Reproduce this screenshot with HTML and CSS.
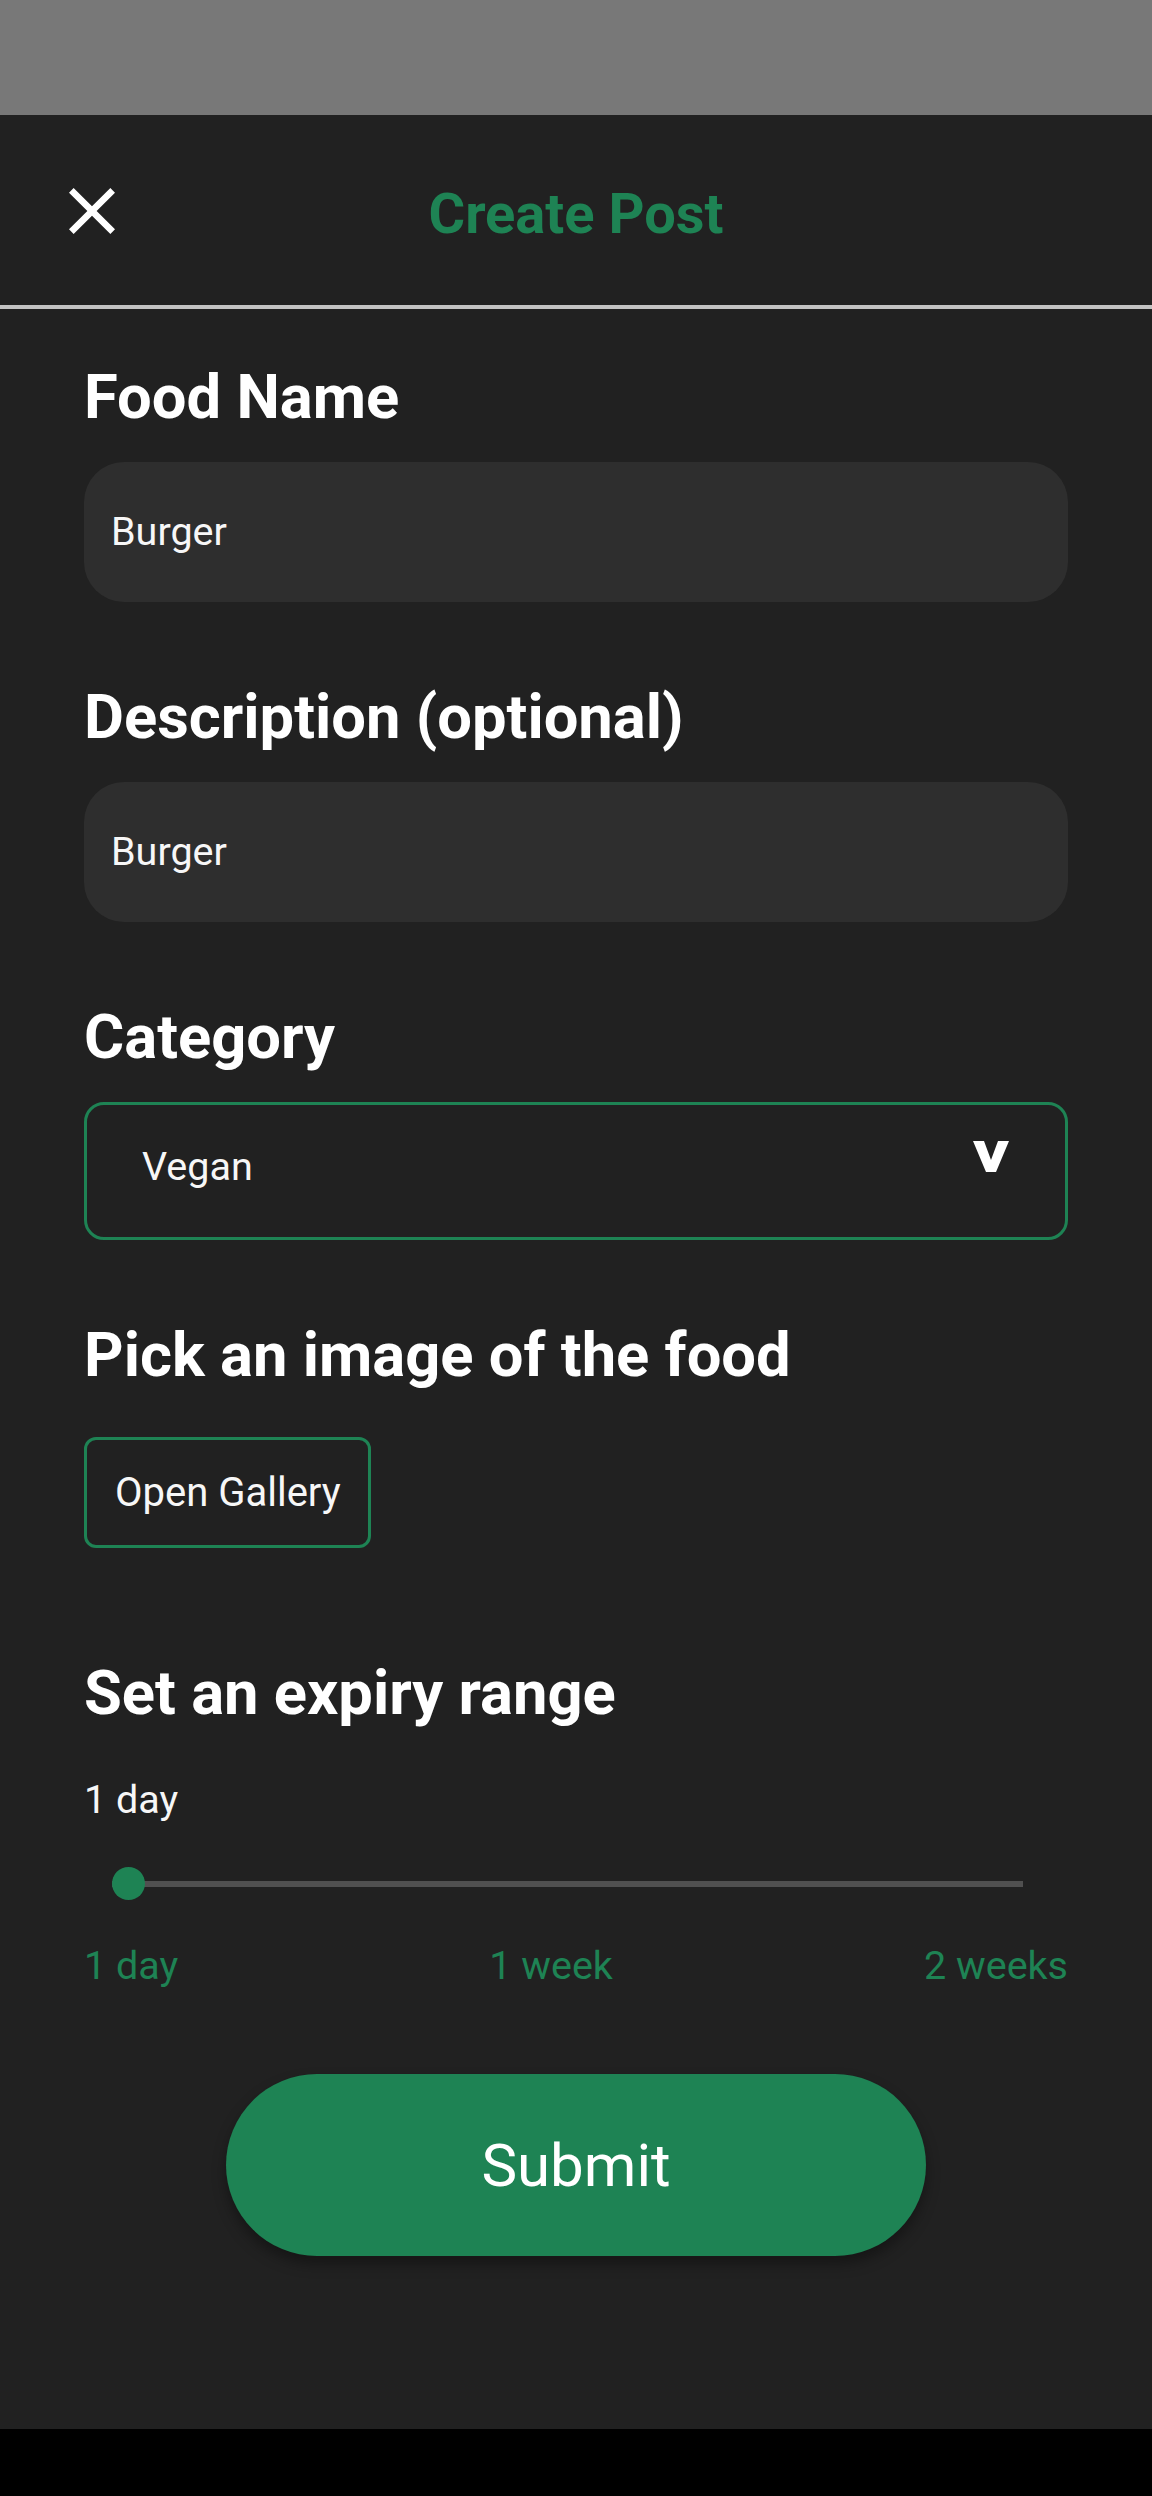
FILE: index.html
```html
<!DOCTYPE html>
<html lang="en">
<head>
<meta charset="utf-8">
<title>Create Post</title>
<link rel="stylesheet" href="styles.css">
</head>
<body>
<div class="phone">
  <div class="statusbar"></div>
  <header class="topbar">
    <div class="close-wrap">
      <svg class="close-icon" viewBox="5 5 14 14" width="46" height="46" aria-label="Close">
        <path fill="#ffffff" d="M19 6.41L17.59 5 12 10.59 6.41 5 5 6.41 10.59 12 5 17.59 6.41 19 12 13.41 17.59 19 19 17.59 13.41 12z"/>
      </svg>
    </div>
    <h1 class="title">Create Post</h1>
    <div></div>
  </header>
  <div class="divider"></div>

  <main class="form">
    <section class="field">
      <h2 class="label">Food Name</h2>
      <div class="input">Burger</div>
    </section>

    <section class="field">
      <h2 class="label">Description (optional)</h2>
      <div class="input">Burger</div>
    </section>

    <section class="field">
      <h2 class="label">Category</h2>
      <div class="select">
        <span class="select-value">Vegan</span>
        <svg class="chevron" width="36" height="31" viewBox="0 0 36 31">
          <polygon fill="#ffffff" points="0,0 11,0 18,19 25,0 36,0 23,31 13,31"/>
        </svg>
      </div>
    </section>

    <section class="field field-image">
      <h2 class="label">Pick an image of the food</h2>
      <div class="gallery-btn">Open Gallery</div>
    </section>

    <section class="field field-expiry">
      <h2 class="label">Set an expiry range</h2>
      <div class="current">1 day</div>
      <div class="slider">
        <div class="track"></div>
        <div class="thumb"></div>
      </div>
      <div class="ticks">
        <span>1 day</span>
        <span>1 week</span>
        <span>2 weeks</span>
      </div>
    </section>

    <div class="submit-row">
      <div class="submit">Submit</div>
    </div>
  </main>

  <div class="navbar"></div>
</div>
</body>
</html>
```

FILE: styles.css
```css
* {
  box-sizing: border-box;
}

html, body {
  margin: 0;
  padding: 0;
  background: #212121;
}

body {
  font-family: Roboto, "Noto Sans", "Liberation Sans", sans-serif;
  color: #ffffff;
}

.phone {
  width: 1152px;
  height: 2496px;
  display: flex;
  flex-direction: column;
  background: #212121;
}

.statusbar {
  height: 115px;
  background: #787878;
  flex: none;
}

.topbar {
  height: 190px;
  flex: none;
  display: grid;
  grid-template-columns: 1fr auto 1fr;
  align-items: center;
  padding-top: 7px;
}

.close-wrap {
  padding-left: 69px;
  margin-bottom: 6px;
  display: flex;
}

.close-icon {
  display: block;
}

.title {
  margin: 0;
  font-size: 56px;
  font-weight: 700;
  line-height: normal;
  color: #1e8354;
}

.divider {
  height: 4px;
  background: #c2c2c2;
  flex: none;
}

.form {
  flex: 1;
  padding: 52px 84px 0;
}

.field + .field {
  margin-top: 79px;
}

.field-image {
  margin-top: 80px;
}

.field + .field-expiry {
  margin-top: 109px;
}

.label {
  margin: 0;
  font-size: 61.5px;
  font-weight: 700;
  line-height: 72px;
  color: #ffffff;
}

.input {
  margin-top: 29px;
  height: 140px;
  border-radius: 40px;
  background: #2e2e2e;
  display: flex;
  align-items: center;
  padding-left: 27px;
  font-size: 39.5px;
  line-height: 46px;
  color: #f7f7f7;
}

.select {
  margin-top: 29px;
  height: 138px;
  border: 3px solid #1e8354;
  border-radius: 20px;
  display: flex;
  justify-content: space-between;
  align-items: flex-start;
  padding: 36px 56px 0 55px;
}

.select-value {
  margin-top: 3px;
  font-size: 39.5px;
  line-height: 46px;
  color: #f7f7f7;
}

.chevron {
  display: block;
}

.gallery-btn {
  margin-top: 46px;
  display: inline-flex;
  align-items: center;
  height: 111px;
  padding: 0 27px 0 28px;
  border: 3px solid #1e8354;
  border-radius: 12px;
  font-size: 40px;
  line-height: 46px;
  color: #f7f7f7;
}

.current {
  margin-top: 48px;
  font-size: 39.5px;
  line-height: 46px;
  color: #f7f7f7;
}

.slider {
  position: relative;
  margin-top: 41px;
  margin-left: 28px;
  width: 911px;
  height: 40px;
  display: flex;
  align-items: center;
}

.track {
  width: 100%;
  height: 6px;
  background: #505050;
}

.thumb {
  position: absolute;
  left: 0;
  top: 3px;
  width: 33px;
  height: 33px;
  border-radius: 50%;
  background: #1e8354;
}

.ticks {
  margin-top: 39px;
  display: flex;
  justify-content: space-between;
  font-size: 39.5px;
  line-height: 46px;
  color: #1e8354;
}

.submit-row {
  margin-top: 85px;
  display: flex;
  justify-content: center;
}

.submit {
  width: 700px;
  height: 182px;
  border-radius: 91px;
  background: #1e8354;
  display: flex;
  align-items: center;
  justify-content: center;
  font-size: 60px;
  color: #ffffff;
  box-shadow: 0 8px 14px rgba(0, 0, 0, 0.35);
}

.navbar {
  height: 67px;
  flex: none;
  background: #000000;
}
```
